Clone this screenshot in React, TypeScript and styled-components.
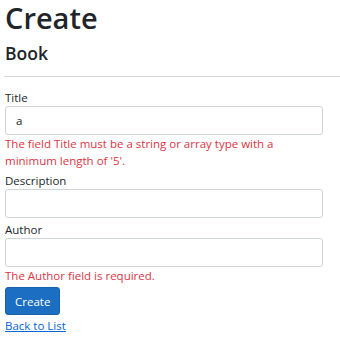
import React, { useState } from 'react'
import styled, { createGlobalStyle } from 'styled-components'

const GlobalStyle = createGlobalStyle`
  html, body {
    margin: 0;
    padding: 0;
    background: #fff;
  }
  body {
    font-family: "Open Sans", "Noto Sans", Arial, sans-serif;
    font-size: 11.5px;
    line-height: 17px;
    color: #212529;
  }
`

const Page = styled.div`
  padding: 0 0 0 5px;
  width: 335px;
`

const Heading = styled.h1`
  margin: 0 0 7px;
  font-size: 29px;
  line-height: 35px;
  font-weight: 600;
  color: #212529;
`

const SubHeading = styled.h4`
  margin: 0;
  font-size: 17.5px;
  line-height: 22px;
  font-weight: 600;
  color: #212529;
`

const Rule = styled.hr`
  margin: 12px 0 12px -1px;
  border: 0;
  border-top: 1px solid #d6d8db;
  height: 0;
`

const Form = styled.form`
  width: 318px;
`

const Group = styled.div`
  margin-bottom: 3px;
`

const Label = styled.label`
  display: block;
  line-height: 17px;
`

const Input = styled.input`
  display: block;
  box-sizing: border-box;
  width: 100%;
  height: 29px;
  padding: 0 10px;
  border: 1px solid #ced4da;
  border-radius: 3px;
  font: inherit;
  color: #212529;
  background: #fff;
  outline: none;
`

const Error = styled.span`
  display: block;
  color: #dc3545;
  line-height: 17px;
`

const Button = styled.button`
  display: block;
  height: 28px;
  padding: 0 9px;
  border: 1px solid #1861ac;
  border-radius: 3px;
  background: #1b6ec2;
  color: #fff;
  font: inherit;
  cursor: pointer;
`

const BackLink = styled.a`
  display: inline-block;
  margin-top: 2px;
  color: #0366d6;
  text-decoration: underline;
`

type Field = {
  name: string
  label: string
  value: string
  error?: string
}

const App = () => {
  const [fields, setFields] = useState<Field[]>([
    { name: 'Title', label: 'Title', value: 'a', error: "The field Title must be a string or array type with a minimum length of '5'." },
    { name: 'Description', label: 'Description', value: '' },
    { name: 'Author', label: 'Author', value: '', error: 'The Author field is required.' },
  ])

  const update = (name: string, value: string) => {
    setFields(fields.map((f) => (f.name === name ? { ...f, value } : f)))
  }

  return (
    <Page>
      <GlobalStyle />
      <Heading>Create</Heading>
      <SubHeading>Book</SubHeading>
      <Rule />
      <Form onSubmit={(e: any) => e.preventDefault()}>
        {fields.map((f) => (
          <Group key={f.name}>
            <Label htmlFor={f.name}>{f.label}</Label>
            <Input id={f.name} value={f.value} onChange={(e: any) => update(f.name, e.target.value)} />
            {f.error && <Error>{f.error}</Error>}
          </Group>
        ))}
        <Button type="submit">Create</Button>
      </Form>
      <BackLink href="#">Back to List</BackLink>
    </Page>
  )
}

export default App
